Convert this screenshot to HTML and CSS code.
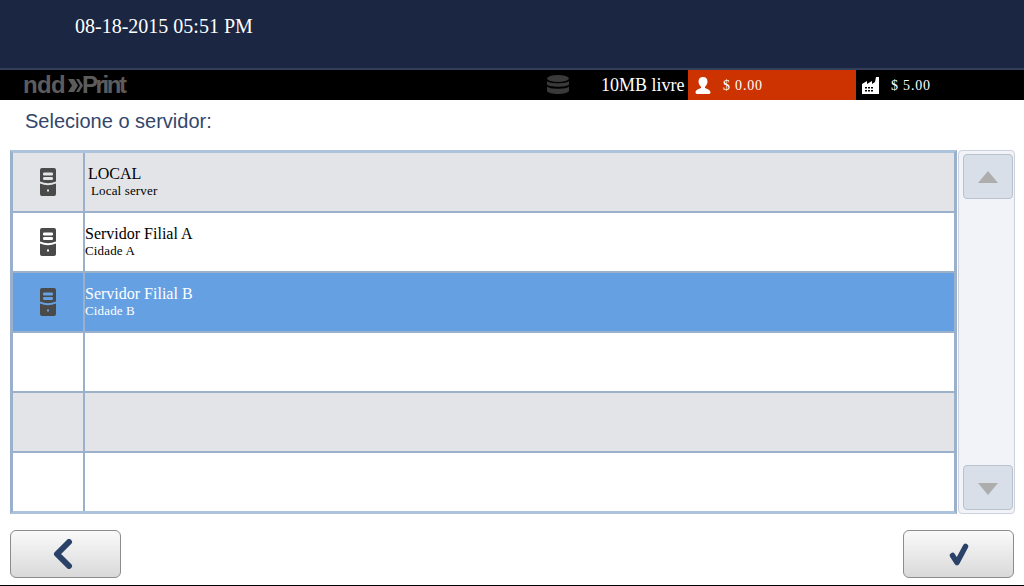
FILE: index.html
```html
<!DOCTYPE html>
<html lang="pt">
<head>
<meta charset="utf-8">
<title>Selecione o servidor</title>
<link rel="stylesheet" href="styles.css">
</head>
<body>
<svg class="defs" width="0" height="0" aria-hidden="true">
  <defs>
    <symbol id="server" viewBox="0 0 16 28">
      <path fill="#4a4a4a" d="M2 0H14a2 2 0 0 1 2 2V13.500Q8 17 0 13.500V2a2 2 0 0 1 2-2ZM0 15.500Q8 19 16 15.500V26a2 2 0 0 1-2 2H2a2 2 0 0 1-2-2Z"/>
      <rect fill="currentColor" x="3" y="4.500" width="10" height="3" rx="1.200"/>
      <rect fill="currentColor" x="3" y="9" width="10" height="3" rx="1.200"/>
      <rect fill="currentColor" x="7" y="21.500" width="2" height="2"/>
    </symbol>
  </defs>
</svg>
<header class="top">
  <div class="clock">08-18-2015 05:51 PM</div>
</header>
<div class="status">
  <div class="logo"><span class="logo-ndd">ndd</span><svg class="logo-mark" width="15" height="15" viewBox="0 0 15 15"><path fill="#5c5c5c" d="M0 1H6L10 7.500 6 14H0L4 7.500ZM8 1H11L15 7.500 11 14H8L12 7.500Z"/></svg><span class="logo-print">Print</span></div>
  <svg class="db" width="22" height="20" viewBox="0 0 22 20"><g fill="#3a3a3a"><ellipse cx="11" cy="3.500" rx="11" ry="3.500"/><path d="M0 6C2 9 20 9 22 6V9.500C20 12.500 2 12.500 0 9.500ZM0 11.500C2 14.500 20 14.500 22 11.500V16C20 20 2 20 0 16Z"/></g></svg>
  <div class="free">10MB livre</div>
  <div class="quota user">
    <svg width="16" height="17" viewBox="0 0 16 17"><path fill="#fff" d="M8 0C11 0 12.500 2 12.500 4.500 12.500 7 11 9 10 9.800V11C12 12 15 12.500 15.500 15 15.500 16 15 17 14 17H2C1 17 .5 16 .5 15 1 12.500 4 12 6 11V9.800C5 9 3.500 7 3.500 4.500 3.500 2 5 0 8 0Z"/></svg>
    <span class="amount">$ 0.00</span>
  </div>
  <div class="quota company">
    <svg width="17" height="17" viewBox="0 0 17 17"><path fill="#fff" fill-rule="evenodd" d="M0 7L5 4V7L10 4V7L13 5 14 0H17V17H0ZM3 10V11.500H5V10ZM6 10V11.500H8V10ZM9 10V11.500H11V10ZM3 13V14.500H5V13ZM6 13V14.500H8V13ZM9 13V14.500H11V13Z"/></svg>
    <span class="amount">$ 5.00</span>
  </div>
</div>
<h1 class="title">Selecione o servidor:</h1>
<main class="picker">
  <div class="list">
    <div class="row alt">
      <div class="cell-icon"><svg class="server" width="16" height="28"><use href="#server"/></svg></div>
      <div class="cell-text first"><div class="name">LOCAL</div><div class="sub">Local server</div></div>
    </div>
    <div class="row">
      <div class="cell-icon"><svg class="server" width="16" height="28"><use href="#server"/></svg></div>
      <div class="cell-text"><div class="name">Servidor Filial A</div><div class="sub">Cidade A</div></div>
    </div>
    <div class="row selected">
      <div class="cell-icon"><svg class="server" width="16" height="28"><use href="#server"/></svg></div>
      <div class="cell-text"><div class="name">Servidor Filial B</div><div class="sub">Cidade B</div></div>
    </div>
    <div class="row"><div class="cell-icon"></div><div class="cell-text"></div></div>
    <div class="row alt"><div class="cell-icon"></div><div class="cell-text"></div></div>
    <div class="row"><div class="cell-icon"></div><div class="cell-text"></div></div>
  </div>
  <div class="scroll">
    <button class="scroll-btn" type="button" aria-label="Subir"><svg width="20" height="12" viewBox="0 0 20 12"><path fill="#adadad" d="M10 0L20 12H0Z"/></svg></button>
    <button class="scroll-btn down" type="button" aria-label="Descer"><svg width="20" height="12" viewBox="0 0 20 12"><path fill="#adadad" d="M0 0H20L10 12Z"/></svg></button>
  </div>
</main>
<footer class="actions">
  <button class="action back" type="button" aria-label="Voltar"><svg width="20" height="30" viewBox="0 0 20 30"><path fill="none" stroke="#2b4268" stroke-width="6" stroke-linecap="round" stroke-linejoin="round" d="M16 3L4 15 16 27"/></svg></button>
  <button class="action" type="button" aria-label="Confirmar"><svg width="20" height="23" viewBox="0 0 20 23"><path fill="none" stroke="#2b4268" stroke-width="5.500" stroke-linecap="round" stroke-linejoin="round" d="M3.500 12.500L8 19.500 16.500 3.500"/></svg></button>
</footer>
</body>
</html>
```
FILE: styles.css
```css
* { box-sizing: border-box; }
html, body { margin: 0; padding: 0; }
body {
  width: 1024px;
  height: 586px;
  overflow: hidden;
  position: relative;
  background: #fff;
  font-family: "Liberation Serif", "Times New Roman", serif;
  border-bottom: 1px solid #000;
}
.defs { display: block; height: 0; }
.top {
  height: 70px;
  background: #1a2642;
  border-bottom: 2px solid #333f58;
  padding: 15px 0 0 75px;
}
.clock { color: #fff; font-size: 20px; line-height: 22px; }
.status {
  height: 30px;
  background: #000;
  display: flex;
  align-items: center;
  color: #fff;
}
.logo {
  width: 546px;
  padding-left: 23px;
  display: flex;
  align-items: center;
  font-family: "Liberation Sans", Arial, sans-serif;
  font-weight: 700;
  font-size: 24px;
  color: #5c5c5c;
  line-height: 30px;
}
.logo-ndd { width: 45px; letter-spacing: -.6px; }
.logo-print { letter-spacing: -2.400px; }
.logo-mark { flex: none; margin-right: -1px; }
.db { margin-left: 1px; }
.free { margin-left: 32px; width: 87px; font-size: 18px; white-space: nowrap; }
.quota {
  height: 30px;
  display: flex;
  align-items: center;
  font-size: 14px;
  letter-spacing: .8px;
}
.amount { padding-top: 2px; }
.quota.user { width: 168px; background: #cc3300; padding-left: 7px; gap: 12px; }
.quota.company { padding-left: 6px; gap: 12px; }
.title {
  margin: 0;
  height: 50px;
  padding: 10px 0 0 25px;
  font-family: "Liberation Sans", Arial, sans-serif;
  font-weight: 400;
  font-size: 20px;
  line-height: 22px;
  color: #33466b;
}
.picker { display: flex; padding-left: 10px; height: 364px; }
.list {
  width: 947px;
  height: 364px;
  border: 3px solid #adc2dc;
  border-left-color: #9bb0cb;
  border-right-color: #9bb0cb;
  display: flex;
  flex-direction: column;
}
.row {
  height: 60px;
  display: flex;
  background: #fff;
  color: #fff;
  border-bottom: 2px solid #9bb0cb;
}
.row:last-child { border-bottom: 0; height: 58px; }
.row.alt { background: #e2e4e8; color: #e2e4e8; }
.row.selected { background: #65a0e3; color: #65a0e3; }
.cell-icon {
  width: 72px;
  border-right: 2px solid #9bb0cb;
  display: flex;
  align-items: center;
  justify-content: center;
}
.cell-text { flex: 1; padding: 12px 0 0 0; color: #000; }
.selected .cell-text { color: #fff; }
.cell-text.first { padding-left: 3px; }
.name { font-size: 16px; line-height: 18px; white-space: nowrap; }
.sub { font-size: 13px; line-height: 16px; letter-spacing: .15px; white-space: nowrap; }
.first .sub { padding-left: 3px; }
.scroll {
  width: 57px;
  margin-left: 1px;
  height: 364px;
  background: #f2f3f8;
  border: 1px solid #cdd3dd;
  border-radius: 4px;
  padding: 3px 1px 3px 4px;
  display: flex;
  flex-direction: column;
  justify-content: space-between;
}
.scroll-btn {
  width: 50px;
  height: 45px;
  padding: 0;
  background: #d8dfe8;
  border: 1px solid #b9c2cd;
  border-radius: 4px;
  display: flex;
  align-items: center;
  justify-content: center;
}
.scroll-btn.down { padding-top: 3px; }
.actions {
  display: flex;
  justify-content: space-between;
  padding: 16px 10px 0 10px;
}
.action {
  width: 111px;
  height: 48px;
  padding: 0;
  border: 1px solid #8c8c8c;
  border-radius: 6px;
  background: linear-gradient(#fafafa, #d9d9d9);
  display: flex;
  align-items: center;
  justify-content: center;
}
.action.back { padding-right: 6px; }
```
